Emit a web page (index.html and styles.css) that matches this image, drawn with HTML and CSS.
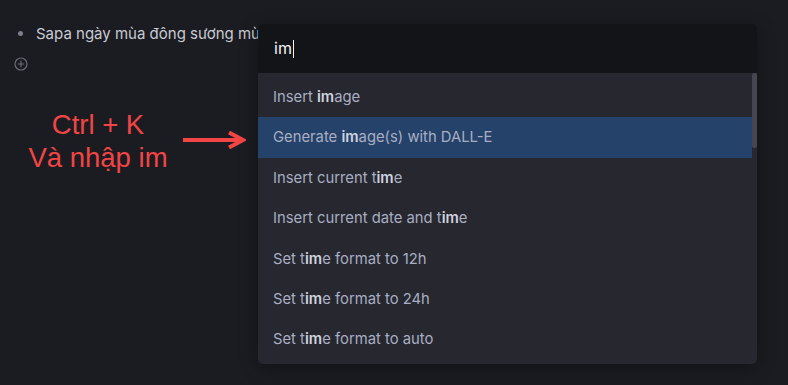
FILE: index.html
```html
<!DOCTYPE html>
<html lang="vi">
<head>
  <meta charset="UTF-8" />
  <meta name="viewport" content="width=device-width, initial-scale=1.0" />
  <title>Ctrl + K</title>
  <link rel="stylesheet" href="styles.css">
</head>
<body>
  <div class="page">
    <div class="editor">
      <div class="block">
        <span class="bullet"></span>
        <span class="block-text">Sapa ngày mùa đông sương mù</span>
      </div>
      <div class="add-row">
        <svg class="add-icon" width="14" height="14" viewBox="0 0 14 14">
          <circle cx="7" cy="7" r="6" fill="none" stroke="currentColor" stroke-width="1.2" />
          <path d="M7 3.8v6.4M3.8 7h6.4" stroke="currentColor" stroke-width="1.2" />
        </svg>
      </div>

      <div class="hint">
        <div class="hint-text">Ctrl + K<br>Và nhập im</div>
        <svg class="hint-arrow" width="64" height="18" viewBox="0 0 64 18">
          <path d="M1 9h56" stroke="#f24545" stroke-width="4" />
          <path d="M47 1.5l14 7.5-14 7.5" fill="none" stroke="#f24545" stroke-width="4" stroke-linejoin="miter" />
        </svg>
      </div>
    </div>

    <div class="palette">
      <div class="palette-input">im<span class="caret"></span></div>
      <div class="palette-list">
        <div class="item">Insert <b>im</b>age</div>
        <div class="item active">Generate <b>im</b>age(s) with DALL-E</div>
        <div class="item">Insert current t<b>im</b>e</div>
        <div class="item">Insert current date and t<b>im</b>e</div>
        <div class="item">Set t<b>im</b>e format to 12h</div>
        <div class="item">Set t<b>im</b>e format to 24h</div>
        <div class="item">Set t<b>im</b>e format to auto</div>
        <div class="scrollbar"></div>
      </div>
    </div>
  </div>
</body>
</html>
```

FILE: styles.css
```css
html,
body {
  margin: 0;
  height: 100%;
}

body {
  background: #1b1c21;
  font-family: Inter, "Noto Sans", sans-serif;
  color: #c9ccd6;
  overflow: hidden;
}

.page {
  position: relative;
  height: 385px;
}

.editor {
  padding: 22px 0 0 17px;
}

.block {
  display: flex;
  align-items: center;
  height: 22px;
}

.bullet {
  width: 5px;
  height: 5px;
  border-radius: 50%;
  background: #7d7f8c;
  margin: 0 13px 0 1px;
}

.block-text {
  font-size: 15px;
  color: #c8cad4;
  white-space: nowrap;
}

.add-row {
  display: flex;
  height: 16px;
  margin-top: 13px;
}

.add-icon {
  color: #6a6c77;
  margin-left: -3px;
}

.hint {
  display: flex;
  align-items: center;
  margin-top: 35px;
  margin-left: -17px;
}

.hint-text {
  width: 196px;
  font-family: "Liberation Sans", Arial, sans-serif;
  font-size: 27.5px;
  line-height: 33px;
  color: #f24545;
  text-align: center;
}

.hint-arrow {
  margin-left: -14px;
  margin-top: -2px;
}

.palette {
  position: absolute;
  left: 258px;
  top: 24px;
  width: 499px;
  border-radius: 5px;
  overflow: hidden;
  box-shadow: 0 4px 18px rgba(0, 0, 0, 0.35);
}

.palette-input {
  height: 49px;
  background: #131418;
  color: #f2f3f6;
  font-size: 16px;
  line-height: 48px;
  padding-left: 16px;
}

.caret {
  display: inline-block;
  width: 1px;
  height: 18px;
  background: #f2f3f6;
  vertical-align: -4px;
  margin-left: 1px;
}

.palette-list {
  position: relative;
  background: #26272f;
  padding: 4px 5px 4px 0;
}

.item {
  height: 40.4px;
  line-height: 40.4px;
  padding-left: 15px;
  font-size: 14.8px;
  color: #a9aec2;
  white-space: nowrap;
}

.item b {
  font-weight: 600;
  color: #cfd2de;
}

.item.active {
  background: #25426b;
}

.scrollbar {
  position: absolute;
  right: 0;
  top: 0;
  width: 5px;
  height: 75px;
  border-radius: 2px;
  background: #45464f;
}
```
